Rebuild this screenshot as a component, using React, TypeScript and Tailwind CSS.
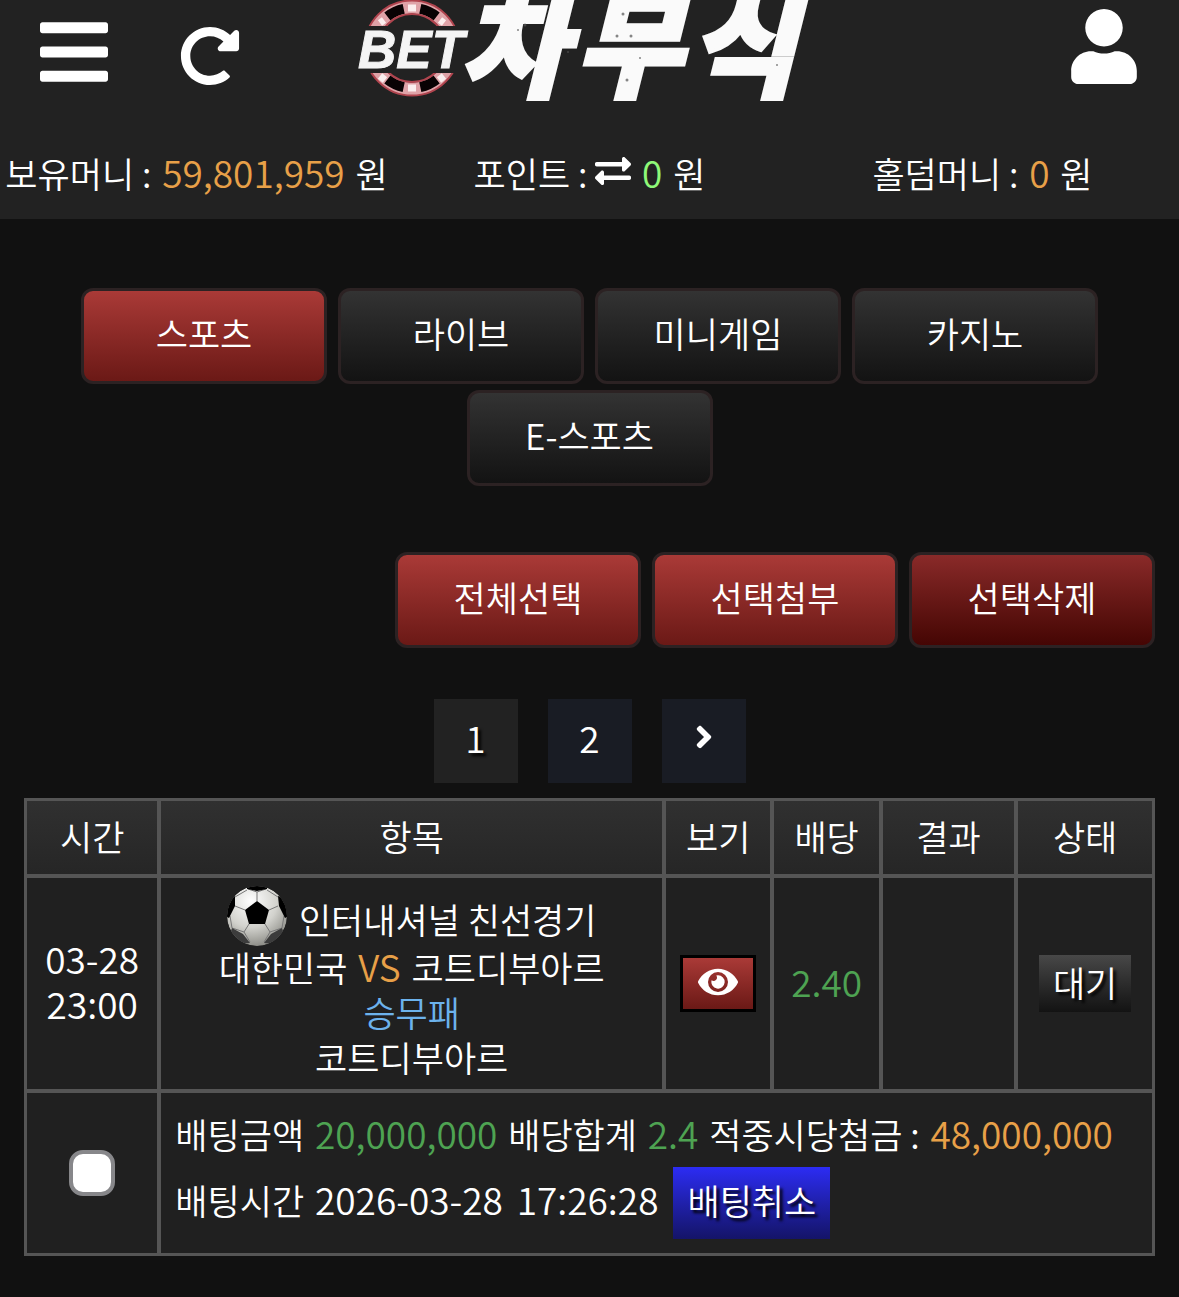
import { useState, type ReactNode } from "react";
import { FaBars, FaRedoAlt, FaUser, FaExchangeAlt, FaAngleRight, FaEye } from "react-icons/fa";

const TABS = ["스포츠", "라이브", "미니게임", "카지노", "E-스포츠"];

const HEADERS = ["시간", "항목", "보기", "배당", "결과", "상태"];

const BUTTON = "h-24 w-[246px] rounded-xl border-[3px] border-[#2c2223] bg-linear-to-b pb-2";
const RED = "from-[#aa3a37] to-[#6b1916]";
const DARK_RED = "from-[#8a2a29] to-[#450604]";
const GRAY = "from-[#333333] to-[#131313]";

const ORANGE = "text-[#e8a048]";
const GREEN = "text-[#4ea352]";

const CELL = "border-2 border-[#555555] text-center";
const SHADOW = "[text-shadow:3px_3px_3px_#000]";

// latin letters and digits run a little larger than the hangul
function Num({ className = "", children }: { className?: string; children: ReactNode }) {
  return <span className={`mx-[3px] text-[37px] leading-none ${className}`}>{children}</span>;
}

function Logo() {
  return (
    <svg viewBox="0 0 470 110" className="h-[110px] w-[470px]" role="img" aria-label="BET 차무식">
      <defs>
        <clipPath id="chip">
          <path d="M0 -10H120V26H0ZM0 73H120V110H0Z" />
        </clipPath>
      </defs>
      <g clipPath="url(#chip)" fill="none">
        <circle cx="57" cy="48" r="41" stroke="#dfa3a8" strokeWidth="13" />
        <path
          d="M32.4 16.5A40 40 0 0 1 48.7 8.9M65.3 8.9A40 40 0 0 1 81.6 16.5M32.4 79.5A40 40 0 0 0 48.7 87.1M65.3 87.1A40 40 0 0 0 81.6 79.5"
          stroke="#080203"
          strokeWidth="10"
        />
        <path d="M53 8H61M25 23L29 20M89 23L85 20M53 88H61M25 76L30 80M89 76L84 80" stroke="#fbeeee" strokeWidth="7" />
        <circle cx="57" cy="48" r="47.5" stroke="#b0444e" strokeWidth="2" />
        <circle cx="57" cy="48" r="34" stroke="#b0444e" strokeWidth="2" />
      </g>
      <text x="3" y="68" fontSize="53" fontWeight="700" fontStyle="italic" fontFamily="Liberation Sans, sans-serif" fill="#f4f4f4" stroke="#f4f4f4" strokeWidth="1">
        BET
      </text>
      <text x="105 220 334" y="88" fontSize="116" fontWeight="900" fontStyle="italic" fontFamily="Noto Sans CJK KR, sans-serif" fill="#fafafa" stroke="#fafafa" strokeWidth="4">
        차무식
      </text>
      <g fill="#555555" opacity="0.7">
        <circle cx="170" cy="25" r="1.5" />
        <circle cx="163" cy="30" r="1" />
        <circle cx="213" cy="52" r="1" />
        <circle cx="268" cy="14" r="1.5" />
        <circle cx="276" cy="36" r="1.5" />
        <circle cx="262" cy="36" r="1.5" />
        <circle cx="285" cy="58" r="1" />
        <circle cx="272" cy="80" r="1.5" />
        <circle cx="422" cy="65" r="1" />
      </g>
    </svg>
  );
}

function SoccerBall() {
  return (
    <svg viewBox="0 0 60 60" className="size-[60px]" aria-hidden="true">
      <defs>
        <radialGradient id="ball" cx="40%" cy="25%" r="80%">
          <stop offset="0" stopColor="#ffffff" />
          <stop offset="0.55" stopColor="#d2d2cd" />
          <stop offset="1" stopColor="#85857f" />
        </radialGradient>
        <clipPath id="ball-edge">
          <circle cx="30" cy="30" r="30" />
        </clipPath>
      </defs>
      <g clipPath="url(#ball-edge)">
        <circle cx="30" cy="30" r="30" fill="url(#ball)" />
        <path
          d="M30 15V6M30 6L21 3M30 6L39 3M42 24L51 20M38 38L43 46M22 38L17 46M18 24L8 20M8 11L20 4M51 11L40 4M3 30L5 42L17 46M57 30L55 42L43 46M17 46L23 56M43 46L37 56"
          stroke="#777777"
          fill="none"
        />
        <path d="M30 15L42 24L38 38H22L18 24Z" />
        <path d="M20 0H40L40 3L30 5L20 3Z" />
        <path d="M0 13L8 10L8 20L2 32L-2 30Z" />
        <path d="M60 13L51 10L52 20L58 32L62 30Z" />
        <path d="M5 42L16 48L23 57L13 58L3 48Z" fill="#3c3c3c" />
        <path d="M55 42L44 48L37 57L47 58L57 48Z" fill="#3c3c3c" />
      </g>
    </svg>
  );
}

export default function App() {
  const [tab, setTab] = useState("스포츠");
  const [checked, setChecked] = useState(false);

  return (
    <div className="min-h-screen bg-[#111111] pb-10 font-['Noto_Sans_CJK_KR',sans-serif] text-[35px] leading-[45px] font-[350] text-white">
      <header className="bg-[#222222]">
        <div className="grid h-[131px] grid-cols-[1fr_auto_1fr] items-start px-10">
          <div className="flex items-center gap-[72px] pt-[13px]">
            <button type="button" aria-label="메뉴">
              <FaBars className="h-[78px] w-[68px]" />
            </button>
            <button type="button" aria-label="새로고침" className="pt-2">
              <FaRedoAlt className="size-[60px]" />
            </button>
          </div>
          <Logo />
          <button type="button" aria-label="내 정보" className="justify-self-end pt-[9px] pr-0.5">
            <FaUser className="h-[75px] w-[66px]" />
          </button>
        </div>
        <div className="grid h-[88px] grid-cols-3 items-center pb-[6px] text-center whitespace-nowrap">
          <p>
            보유머니 : <Num className={ORANGE}>59,801,959</Num> 원
          </p>
          <p>
            포인트 : <FaExchangeAlt className="inline size-9 align-[-1px]" /> <Num className="text-[#8ef878]">0</Num> 원
          </p>
          <p>
            홀덤머니 : <Num className={ORANGE}>0</Num> 원
          </p>
        </div>
      </header>

      <nav className="mt-[69px] flex flex-wrap justify-center gap-x-[11px] gap-y-[6px]">
        {TABS.map((name) => (
          <button key={name} type="button" onClick={() => setTab(name)} className={`${BUTTON} ${tab === name ? RED : GRAY}`}>
            {name}
          </button>
        ))}
      </nav>

      <div className="mt-[66px] flex justify-end gap-[11px] px-6">
        <button type="button" onClick={() => setChecked(true)} className={`${BUTTON} ${RED}`}>전체선택</button>
        <button type="button" className={`${BUTTON} ${RED}`}>선택첨부</button>
        <button type="button" className={`${BUTTON} ${DARK_RED}`}>선택삭제</button>
      </div>

      <div className="mt-[51px] flex justify-center gap-[30px]">
        <a href="#1" className={`flex size-[84px] items-center justify-center bg-[#222222] pb-2 ${SHADOW}`}>
          <Num>1</Num>
        </a>
        <a href="#2" className="flex size-[84px] items-center justify-center bg-[#191c24] pb-2">
          <Num>2</Num>
        </a>
        <a href="#next" aria-label="다음" className="flex size-[84px] items-center justify-center bg-[#191c24] pb-2">
          <FaAngleRight className="size-9" />
        </a>
      </div>

      <div className="mt-[15px] px-6">
        <table className="w-full table-fixed border-separate border-spacing-0 border border-[#555555] bg-[#202020]">
          <colgroup>
            <col className="w-[11.9%]" />
            <col />
            <col className="w-[9.6%]" />
            <col className="w-[9.6%]" />
            <col className="w-[12%]" />
            <col className="w-[12.2%]" />
          </colgroup>
          <thead>
            <tr>
              {HEADERS.map((h) => (
                <th key={h} className={`${CELL} h-[77px] bg-linear-to-b from-[#303030] to-[#262626] pb-1 font-[350]`}>
                  {h}
                </th>
              ))}
            </tr>
          </thead>
          <tbody>
            <tr>
              <td className={`${CELL} pb-[6px]`}>
                <Num>03-28</Num>
                <br />
                <Num>23:00</Num>
              </td>
              <td className={`${CELL} pt-2 pb-[10px]`}>
                <div className="flex h-[58px] items-start justify-center gap-3">
                  <SoccerBall />
                  <span className="leading-[66px]">인터내셔널 친선경기</span>
                </div>
                <div>
                  대한민국 <Num className={ORANGE}>VS</Num> 코트디부아르
                </div>
                <div className="text-[#6cb2ec]">승무패</div>
                <div>코트디부아르</div>
              </td>
              <td className={CELL}>
                <button
                  type="button"
                  aria-label="보기"
                  className="inline-flex h-[57px] w-[76px] items-center justify-center border-[3px] border-black bg-linear-to-b from-[#aa3a37] to-[#6b1916] pb-1 align-middle"
                >
                  <FaEye className="size-10" />
                </button>
              </td>
              <td className={`${CELL} pb-1`}>
                <Num className={GREEN}>2.40</Num>
              </td>
              <td className={CELL}></td>
              <td className={CELL}>
                <span className={`inline-block bg-linear-to-b from-[#484848] to-[#131313] px-[14px] pt-1 pb-2 align-middle ${SHADOW}`}>대기</span>
              </td>
            </tr>
            <tr>
              <td className={`${CELL} pb-[6px]`}>
                <input
                  type="checkbox"
                  aria-label="배팅 선택"
                  checked={checked}
                  onChange={(e) => setChecked(e.target.checked)}
                  className="size-[46px] appearance-none rounded-[14px] border-4 border-[#87878a] bg-white align-middle checked:bg-blue-600"
                />
              </td>
              <td colSpan={5} className="border-2 border-[#555555] pt-[18px] pb-[14px] pl-[14px] text-left whitespace-nowrap">
                <div>
                  배팅금액 <Num className={GREEN}>20,000,000</Num> 배당합계 <Num className={GREEN}>2.4</Num> 적중시당첨금 :{" "}
                  <Num className={ORANGE}>48,000,000</Num>
                </div>
                <div className="mt-[11px] flex items-center gap-3">
                  <p className="pb-2">
                    배팅시간 <Num>2026-03-28</Num> <Num>17:26:28</Num>
                  </p>
                  <button type="button" className={`h-[72px] bg-linear-to-b from-[#2c2cf4] to-[#141468] px-[14px] pb-2 ${SHADOW}`}>
                    배팅취소
                  </button>
                </div>
              </td>
            </tr>
          </tbody>
        </table>
      </div>
    </div>
  );
}
